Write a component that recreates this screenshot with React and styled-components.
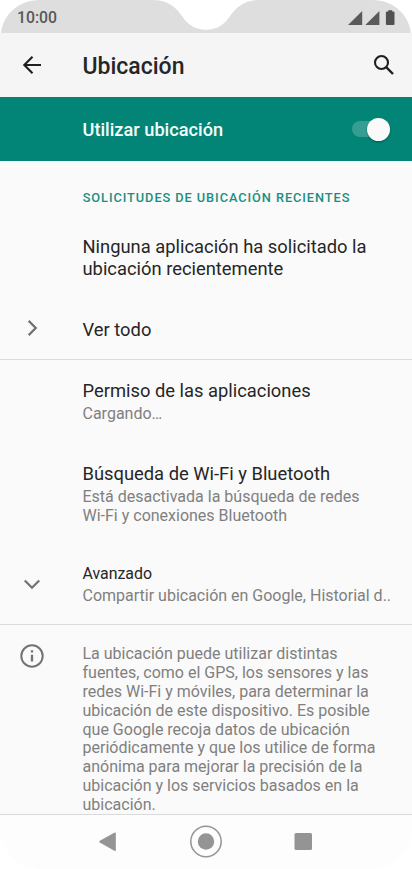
import React from 'react';
import styled, { createGlobalStyle } from 'styled-components';

const GlobalStyle = createGlobalStyle`
  * { box-sizing: border-box; }
  html, body { margin: 0; background: #fff; }
  body { overflow: hidden; }
`;

const Phone = styled.div`
  display: flex;
  flex-direction: column;
  width: 412px;
  height: 869px;
  overflow: hidden;
  font-family: Roboto, sans-serif;
  color: #262626;
  background: #fff;
`;

const StatusBar = styled.header`
  display: flex;
  align-items: center;
  justify-content: space-between;
  height: 33px;
  flex: none;
  padding: 2px 16px 0 17px;
  position: relative;
  isolation: isolate;
`;

const StatusShape = styled.svg`
  position: absolute;
  inset: 0;
  z-index: -1;
`;

const Clock = styled.time`
  margin-top: 1px;
  font-size: 15.8px;
  font-weight: 500;
  line-height: 20px;
  color: #585858;
`;

const StatusIcons = styled.svg`
  flex: none;
  margin-right: 1px;
`;

const AppBar = styled.div`
  display: grid;
  grid-template-columns: 82.5px 1fr 40px;
  align-items: center;
  flex: none;
  height: 64px;
  padding-right: 8px;
  background: #f5f5f5;
`;

const Title = styled.h1`
  margin: 4px 0 0;
  font-size: 23px;
  font-weight: 500;
  line-height: 28px;
`;

const IconSlot = styled.span`
  display: flex;
  justify-content: center;
  width: 64px;
`;

const SearchSlot = styled.span`
  display: flex;
  justify-content: center;
`;

const ToggleBar = styled.div`
  display: flex;
  align-items: center;
  justify-content: space-between;
  flex: none;
  height: 64px;
  padding: 0 22px 0 82.5px;
  color: #f3fffc;
  background: #028576;
`;

const ToggleLabel = styled.span`
  margin-top: 1px;
  font-size: 18.2px;
  font-weight: 500;
  line-height: 22px;
`;

const Switch = styled.span`
  display: flex;
  align-items: center;
  justify-content: flex-end;
  width: 38px;
  height: 16px;
  border-radius: 8px;
  background: #359d91;
`;

const Thumb = styled.span`
  width: 23px;
  height: 23px;
  border-radius: 50%;
  background: #fafafa;
  box-shadow: 0 1px 2px rgba(0, 0, 0, 0.35);
`;

const Content = styled.main`
  flex: 1;
  min-height: 0;
  overflow: hidden;
  background: #fafafa;
`;

const Section = styled.section`
  display: flex;
  flex-direction: column;
  height: ${(p) => p.$height}px;
  padding-top: ${(p) => p.$top}px;
  border-bottom: 1px solid #dadada;
`;

const SectionTitle = styled.h2`
  margin: 0 0 30px 82.7px;
  font-size: 12.8px;
  font-weight: 500;
  line-height: 16px;
  letter-spacing: 0.92px;
  white-space: nowrap;
  color: #198f81;
`;

const Item = styled.div`
  display: grid;
  grid-template-columns: 82.5px 1fr;
  margin-bottom: ${(p) => p.$gap ?? 0}px;
`;

const ItemIcon = styled(IconSlot)`
  padding-top: ${(p) => p.$drop ?? 0}px;
`;

const ItemTitle = styled.div`
  font-size: ${(p) => (p.$small ? 15.9 : 18.35)}px;
  line-height: ${(p) => (p.$small ? 19 : 22)}px;
  padding-top: ${(p) => p.$drop ?? 0}px;
  white-space: nowrap;
`;

const Summary = styled.div`
  margin-top: ${(p) => p.$gap ?? 3}px;
  font-size: 16px;
  line-height: 18.9px;
  white-space: nowrap;
  color: #808080;
`;

const NavBar = styled.nav`
  display: flex;
  align-items: center;
  justify-content: center;
  flex: none;
  height: 55px;
  border-top: 1px solid #dadada;
  border-radius: 0 0 40px 40px;
  background: #fdfdfd;
`;

const NavButton = styled.span`
  display: flex;
  justify-content: center;
  width: 98px;
`;

function Icon({ size = 24, children }) {
  return (
    <svg width={size} height={size} viewBox="0 0 24 24" fill="none" stroke="#737373" strokeWidth="2.1">
      {children}
    </svg>
  );
}

function Lines({ items }) {
  return items.map((line) => <div key={line}>{line}</div>);
}

const INFO = [
  'La ubicación puede utilizar distintas',
  'fuentes, como el GPS, los sensores y las',
  'redes Wi-Fi y móviles, para determinar la',
  'ubicación de este dispositivo. Es posible',
  'que Google recoja datos de ubicación',
  'periódicamente y que los utilice de forma',
  'anónima para mejorar la precisión de la',
  'ubicación y los servicios basados en la',
  'ubicación.',
];

export default function App() {
  return (
    <>
      <GlobalStyle />
      <Phone>
        <StatusBar>
          <StatusShape width="412" height="33" viewBox="0 0 412 33">
            <path
              d="M1 33C3 16 17 0 40 0H152C167 0 175 6 182 16C188 25 195 29.700 206 29.700C217 29.700 224 25 230 16C237 6 245 0 260 0H372C395 0 409 16 411 33Z"
              fill="#dedede"
            />
          </StatusShape>
          <Clock>10:00</Clock>
          <StatusIcons width="47" height="16" viewBox="0 0 47 16" fill="#5a5a5a">
            <path d="M0 15L14.2 1V15ZM17.3 15L31.4 1V15Z" />
            <path d="M40.2 .2h4v1.2h1.3a1 1 0 0 1 1 1v11.6a1 1 0 0 1-1 1h-6.6a1 1 0 0 1-1-1V2.4a1 1 0 0 1 1-1h1.3Z" fill="#505050" />
          </StatusIcons>
        </StatusBar>

        <AppBar>
          <IconSlot>
            <svg width="24" height="24" viewBox="0 0 24 24" fill="none" stroke="#1f1f1f" strokeWidth="2.1">
              <path d="M21 12H4.500M12.500 3.800L4.300 12l8.200 8.200" />
            </svg>
          </IconSlot>
          <Title>Ubicación</Title>
          <SearchSlot>
            <svg width="24" height="24" viewBox="0 0 24 24" fill="none" stroke="#1f1f1f" strokeWidth="2.1">
              <circle cx="9.5" cy="9.5" r="6.5" />
              <path d="M14.200 14.200L21 21" strokeWidth="2.4" />
            </svg>
          </SearchSlot>
        </AppBar>

        <ToggleBar>
          <ToggleLabel>Utilizar ubicación</ToggleLabel>
          <Switch><Thumb /></Switch>
        </ToggleBar>

        <Content>
          <Section $height={199} $top={29}>
            <SectionTitle>SOLICITUDES DE UBICACIÓN RECIENTES</SectionTitle>
            <Item $gap={38}>
              <span />
              <ItemTitle><Lines items={['Ninguna aplicación ha solicitado la', 'ubicación recientemente']} /></ItemTitle>
            </Item>
            <Item>
              <ItemIcon>
                <Icon size={20}><path d="M8 3.500L16.500 12L8 20.500" strokeWidth="2.7" /></Icon>
              </ItemIcon>
              <ItemTitle $drop={1}>Ver todo</ItemTitle>
            </Item>
          </Section>

          <Section $height={265} $top={20}>
            <Item $gap={39}>
              <span />
              <div>
                <ItemTitle>Permiso de las aplicaciones</ItemTitle>
                <Summary>Cargando…</Summary>
              </div>
            </Item>
            <Item $gap={38}>
              <span />
              <div>
                <ItemTitle>Búsqueda de Wi-Fi y Bluetooth</ItemTitle>
                <Summary><Lines items={['Está desactivada la búsqueda de redes', 'Wi-Fi y conexiones Bluetooth']} /></Summary>
              </div>
            </Item>
            <Item>
              <ItemIcon $drop={8}>
                <Icon><path d="M4.800 8.500L12 15.700L19.200 8.500" strokeWidth="2.3" /></Icon>
              </ItemIcon>
              <div>
                <ItemTitle $small>Avanzado</ItemTitle>
                <Summary $gap={4}>Compartir ubicación en Google, Historial d..</Summary>
              </div>
            </Item>
          </Section>

          <Section $height={191} $top={19}>
            <Item>
              <ItemIcon>
                <Icon>
                  <circle cx="12" cy="12" r="10.7" strokeWidth="2" />
                  <path d="M12 10.700V17.500M12 6.300V8.600" strokeWidth="2.3" />
                </Icon>
              </ItemIcon>
              <Summary $gap={0.9}><Lines items={INFO} /></Summary>
            </Item>
          </Section>
        </Content>

        <NavBar>
          <NavButton>
            <svg width="20" height="20" viewBox="0 0 20 20" fill="#949494">
              <path d="M1.800 8.700L16.300 .800Q17.800 .1 17.800 1.500V18Q17.800 19.400 16.300 18.700L1.800 10.600Q.5 9.600 1.800 8.700Z" />
            </svg>
          </NavButton>
          <NavButton>
            <svg width="34" height="34" viewBox="0 0 34 34" fill="#949494">
              <circle cx="17" cy="16.5" r="15.2" fill="none" stroke="#949494" strokeWidth="1.5" />
              <circle cx="17" cy="16.5" r="8.2" />
            </svg>
          </NavButton>
          <NavButton>
            <svg width="20" height="18" viewBox="0 0 20 18" fill="#949494">
              <rect x="0.5" y="0" width="17.5" height="17" rx="1.5" />
            </svg>
          </NavButton>
        </NavBar>
      </Phone>
    </>
  );
}
